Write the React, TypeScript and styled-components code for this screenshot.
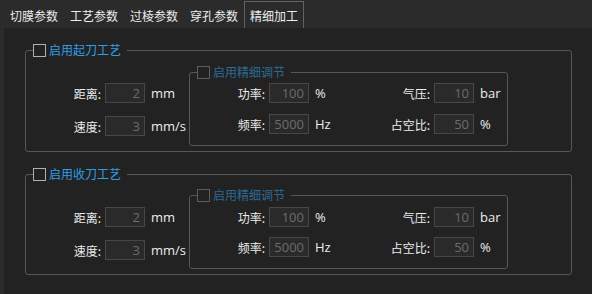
import styled, { createGlobalStyle } from "styled-components"

const GlobalStyle = createGlobalStyle`
    html, body {
        margin: 0;
        padding: 0;
        background: #2b2b2b;
        width: 592px;
        height: 294px;
        overflow: hidden;
    }
    body {
        font-family: 'Noto Sans CJK SC', 'Noto Sans', sans-serif;
        font-size: 12px;
        color: #e4e4e4;
    }
`

const tabs = ['切膜参数', '工艺参数', '过棱参数', '穿孔参数', '精细加工']

type Field = { label: string; value: string; unit: string }

const leftFields: Field[] = [
    { label: '距离:', value: '2', unit: 'mm' },
    { label: '速度:', value: '3', unit: 'mm/s' },
]

const fineFields: Field[] = [
    { label: '功率:', value: '100', unit: '%' },
    { label: '气压:', value: '10', unit: 'bar' },
    { label: '频率:', value: '5000', unit: 'Hz' },
    { label: '占空比:', value: '50', unit: '%' },
]

const FieldCells = ({ field }: { field: Field }) => (
    <>
        <Label>{field.label}</Label>
        <ValueBox>{field.value}</ValueBox>
        <Unit>{field.unit}</Unit>
    </>
)

// second group in the original is one pixel tighter
const ProcessGroup = ({ title, tight }: { title: string; tight?: boolean }) => (
    <OuterGroup>
        <Legend>
            <CheckBox />
            <Title>{title}</Title>
        </Legend>
        <GroupBody>
            <LeftGrid>
                {leftFields.map(f => <FieldCells key={f.label} field={f} />)}
            </LeftGrid>
            <InnerGroup $tight={tight}>
                <Legend>
                    <CheckBox $dim />
                    <Title $dim>启用精细调节</Title>
                </Legend>
                <FineGrid $tight={tight}>
                    {fineFields.map(f => <FieldCells key={f.label} field={f} />)}
                </FineGrid>
            </InnerGroup>
        </GroupBody>
    </OuterGroup>
)

const App = () => {
    return (
        <>
            <GlobalStyle />
            <Widget>
                <TabBar>
                    {tabs.map(t => (
                        <Tab key={t} $active={t === '精细加工'}>{t}</Tab>
                    ))}
                </TabBar>
                <Pane>
                    <ProcessGroup title="启用起刀工艺" />
                    <ProcessGroup title="启用收刀工艺" tight />
                </Pane>
            </Widget>
        </>
    )
}

const Widget = styled.div`
    margin-left: 4px;
    width: 588px;
    height: 294px;
    display: flex;
    flex-direction: column;
`

const TabBar = styled.div`
    display: flex;
    height: 28px;
    background: #2b2b2b;
`

const Tab = styled.div<{ $active?: boolean }>`
    box-sizing: border-box;
    width: 60px;
    margin-top: 1px;
    height: 27px;
    line-height: 27px;
    text-align: center;
    color: #ececec;
    border: 1px solid ${({ $active }) => $active ? '#626262' : 'transparent'};
    border-bottom: none;
    background: #2b2b2b;
`

const Pane = styled.div`
    flex: 1;
    background: #222222;
    padding: 15px 19px 0 21px;
    display: flex;
    flex-direction: column;
    gap: 15px;
`

const GroupBox = styled.fieldset`
    margin: 0;
    padding: 0;
    border: 1px solid #575757;
    border-radius: 3px;
    min-width: 0;
`

const OuterGroup = styled(GroupBox)`
    width: 547px;
    box-sizing: border-box;
`

const InnerGroup = styled(GroupBox)<{ $tight?: boolean }>`
    box-sizing: border-box;
    width: 319px;
    margin: ${({ $tight }) => $tight ? '7px 0 5px 0' : '8px 0 5px 0'};
`

const Legend = styled.legend`
    margin-left: 7px;
    padding: 0 6px 0 0;
    height: 14px;
    display: flex;
    align-items: center;
    gap: 3px;
`

const CheckBox = styled.span<{ $dim?: boolean }>`
    box-sizing: border-box;
    width: 13px;
    height: 13px;
    border: 1px solid ${({ $dim }) => $dim ? '#5e5e5e' : '#b0b0b0'};
    background: transparent;
`

const Title = styled.span<{ $dim?: boolean }>`
    font-size: 12px;
    line-height: 14px;
    color: ${({ $dim }) => $dim ? '#2c6a92' : '#2f9ee2'};
`

const GroupBody = styled.div`
    display: flex;
    align-items: flex-start;
`

const LeftGrid = styled.div`
    display: grid;
    grid-template-columns: 79px 40px 44px;
    row-gap: 13px;
    padding-top: 26px;
    align-items: center;
`

const FineGrid = styled.div<{ $tight?: boolean }>`
    display: grid;
    grid-template-columns: 79px 40px 46px 79px 40px auto;
    row-gap: ${({ $tight }) => $tight ? '10px' : '11px'};
    padding: ${({ $tight }) => $tight ? '5px 0 11px 0' : '4px 0 11px 0'};
    align-items: center;
`

const Label = styled.span`
    text-align: right;
    padding-right: 4px;
    color: #ececec;
    white-space: nowrap;
`

const ValueBox = styled.div`
    box-sizing: border-box;
    height: 20px;
    border: 1px solid #474747;
    background: #2a2a2a;
    color: #6c6c6c;
    text-align: right;
    padding-right: 4px;
    line-height: 18px;
    font-family: 'Open Sans', 'Noto Sans', sans-serif;
    font-size: 13px;
`

const Unit = styled.span`
    padding-left: 6px;
    color: #ececec;
    font-family: 'Open Sans', 'Noto Sans', sans-serif;
    font-size: 13px;
    white-space: nowrap;
`

export default App
